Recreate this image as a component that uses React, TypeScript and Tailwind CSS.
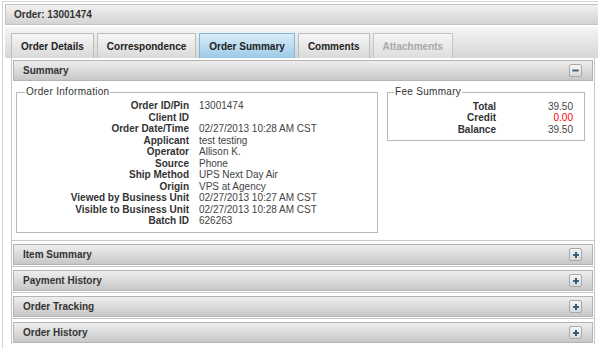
import { Minus, Plus } from "lucide-react";

const orderInfo: [string, string][] = [
  ["Order ID/Pin", "13001474"],
  ["Client ID", ""],
  ["Order Date/Time", "02/27/2013 10:28 AM CST"],
  ["Applicant", "test testing"],
  ["Operator", "Allison K."],
  ["Source", "Phone"],
  ["Ship Method", "UPS Next Day Air"],
  ["Origin", "VPS at Agency"],
  ["Viewed by Business Unit", "02/27/2013 10:27 AM CST"],
  ["Visible to Business Unit", "02/27/2013 10:28 AM CST"],
  ["Batch ID", "626263"],
];

const tabs = [
  { label: "Order Details", state: "normal" },
  { label: "Correspondence", state: "normal" },
  { label: "Order Summary", state: "active" },
  { label: "Comments", state: "normal" },
  { label: "Attachments", state: "disabled" },
];

function ToggleButton({ open }: { open: boolean }) {
  return (
    <div className="w-[13px] h-[13px] flex items-center justify-center rounded-[2px] border border-[#a9a9a9] bg-gradient-to-b from-[#f6f6f6] to-[#d9d9d9]">
      {open ? (
        <Minus className="w-[11px] h-[11px] text-[#3a5d77]" strokeWidth={4} strokeLinecap="butt" />
      ) : (
        <Plus className="w-[10px] h-[10px] text-[#2d5673]" strokeWidth={4.5} strokeLinecap="butt" />
      )}
    </div>
  );
}

function SectionHeader({ title, open }: { title: string; open: boolean }) {
  return (
    <div className="mx-[1px] h-[21px] flex items-center justify-between pl-[9px] pr-[10px] border border-[#b4b4b4] bg-gradient-to-b from-[#eeeeee] to-[#c7c7c7]">
      <span className="font-bold text-[#333]">{title}</span>
      <ToggleButton open={open} />
    </div>
  );
}

export default function App() {
  return (
    <div className="w-[598px] h-[348px] overflow-hidden bg-white font-['Liberation_Sans',Arial,sans-serif] text-[10px] text-[#333]">
      {/* outer frame */}
      <div className="ml-[2px] mt-[1px] w-[620px] h-[380px] border border-[#d2d2d2] pt-[2px] pl-[2px]">
        {/* order title bar */}
        <div className="h-[21px] flex items-center pl-[8px] border border-[#c2c2c2] bg-gradient-to-b from-[#f1f1f1] to-[#d3d3d3] font-bold text-[#333]">
          Order: 13001474
        </div>

        {/* tab strip */}
        <div className="mt-[2px] h-[31px] flex items-end gap-[3px] pl-[6px] bg-gradient-to-b from-[#f5f5f5] to-[#d6d6d6]">
          {tabs.map((t) => (
            <div
              key={t.label}
              className={
                t.state === "active"
                  ? "h-[25px] flex items-center px-[9px] border border-b-0 border-[#86b3d1] bg-gradient-to-b from-[#d9edf9] to-[#9ccae7] font-bold text-[#222]"
                  : t.state === "disabled"
                  ? "h-[25px] flex items-center px-[9px] border border-b-0 border-[#c4c4c4] bg-gradient-to-b from-[#f6f6f6] to-[#dddddd] font-bold text-[#a9a9a9]"
                  : "h-[25px] flex items-center px-[9px] border border-b-0 border-[#bdbdbd] bg-gradient-to-b from-[#f6f6f6] to-[#d9d9d9] font-bold text-[#222]"
              }
            >
              {t.label}
            </div>
          ))}
        </div>

        {/* tab panel */}
        <div className="ml-[6px] w-[584px] border-l border-r border-[#c6c6c6]">
          {/* Summary section */}
          <div className="pt-[2px]">
            <SectionHeader title="Summary" open />
            <div className="h-[159px] flex items-start gap-[9px] pl-[4px] pt-[5px]">
              <fieldset className="w-[362px] border border-[#b9b9b9] pb-[5px]">
                <legend className="ml-[8px] px-[1px] leading-[12px] tracking-[0.3px] text-[#333]">Order Information</legend>
                <div className="grid grid-cols-[172px_1fr] gap-x-[10px] pt-[2px] leading-[11.5px]">
                  {orderInfo.map(([k, v]) => (
                    <div key={k} className="contents">
                      <span className="text-right font-bold text-[#333]">{k}</span>
                      <span className="text-[#444] h-[11.5px]">{v}</span>
                    </div>
                  ))}
                </div>
              </fieldset>

              <fieldset className="w-[198px] border border-[#b9b9b9] pb-[5px]">
                <legend className="ml-[6px] px-[1px] leading-[12px] tracking-[0.3px] text-[#333]">Fee Summary</legend>
                <div className="grid grid-cols-[108px_77px] pt-[3px] leading-[11.3px]">
                  <span className="text-right font-bold">Total</span>
                  <span className="text-right text-[#444]">39.50</span>
                  <span className="text-right font-bold">Credit</span>
                  <span className="text-right text-[#ff0000]">0.00</span>
                  <span className="text-right font-bold">Balance</span>
                  <span className="text-right text-[#444]">39.50</span>
                </div>
              </fieldset>
            </div>
          </div>

          {/* collapsed sections */}
          {["Item Summary", "Payment History", "Order Tracking", "Order History"].map((s) => (
            <div key={s} className="border-t border-[#c6c6c6] pt-[3px] pb-[1px]">
              <SectionHeader title={s} open={false} />
            </div>
          ))}
        </div>
      </div>
    </div>
  );
}
